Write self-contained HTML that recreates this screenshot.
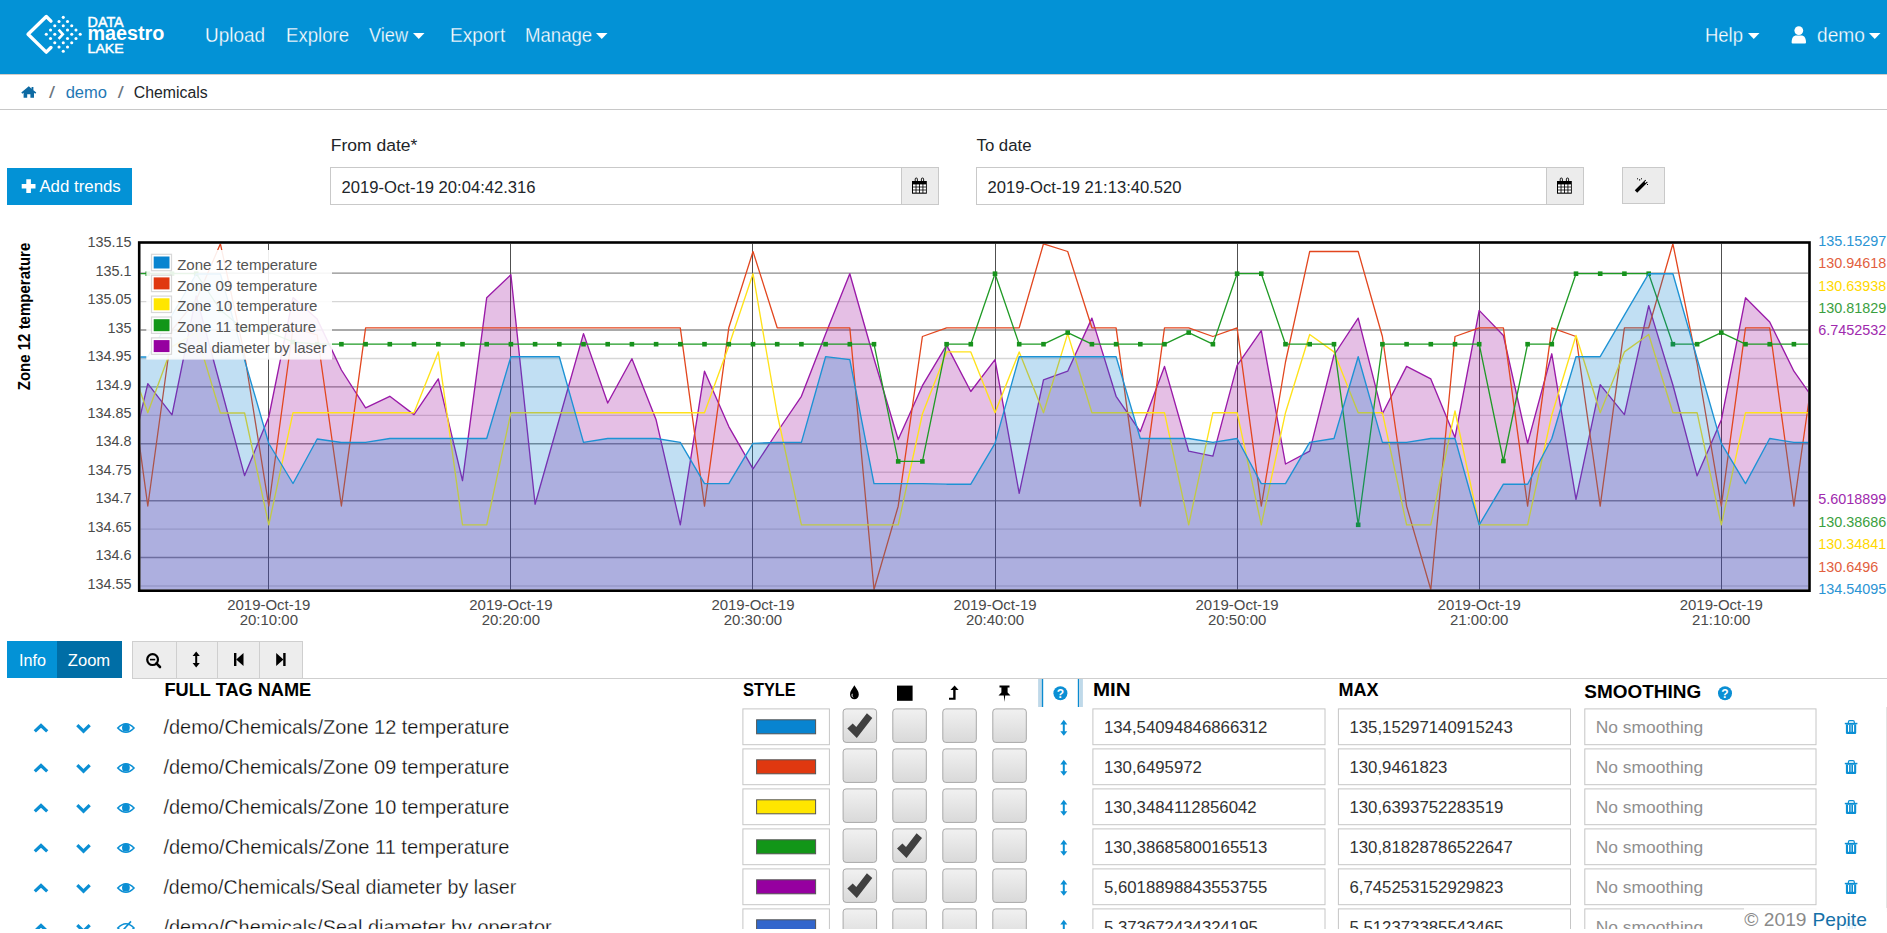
<!DOCTYPE html><html><head><meta charset="utf-8"><style>
html,body{margin:0;padding:0;background:#fff;width:1887px;height:933px;overflow:hidden;position:relative;font-family:"Liberation Sans",sans-serif}
.abs{position:absolute}
</style></head><body>
<div class="abs" style="left:0;top:0;width:1887px;height:74px;background:#0392d6"></div>
<div class="abs" style="left:0;top:74px;width:1887px;height:1px;background:#d2ccc8"></div>
<svg style="position:absolute;left:0;top:0" width="180" height="74">
<g fill="#fff"><circle cx="63.26" cy="17.33" r="1.55"/><circle cx="59.02" cy="21.57" r="1.55"/><circle cx="67.50" cy="21.57" r="1.55"/><circle cx="54.78" cy="25.81" r="1.55"/><circle cx="63.26" cy="25.81" r="1.55"/><circle cx="71.74" cy="25.81" r="1.55"/><circle cx="50.53" cy="30.05" r="1.55"/><circle cx="67.50" cy="30.05" r="1.55"/><circle cx="75.98" cy="30.05" r="1.55"/><circle cx="46.29" cy="34.29" r="1.55"/><circle cx="54.78" cy="34.29" r="1.55"/><circle cx="71.74" cy="34.29" r="1.55"/><circle cx="80.22" cy="34.29" r="1.55"/><circle cx="50.53" cy="38.53" r="1.55"/><circle cx="67.50" cy="38.53" r="1.55"/><circle cx="75.98" cy="38.53" r="1.55"/><circle cx="54.78" cy="42.78" r="1.55"/><circle cx="63.26" cy="42.78" r="1.55"/><circle cx="71.74" cy="42.78" r="1.55"/><circle cx="59.02" cy="47.02" r="1.55"/><circle cx="67.50" cy="47.02" r="1.55"/><circle cx="63.26" cy="51.26" r="1.55"/></g>
<polyline points="50.96,21.15 46.29,16.48 28.06,34.29 46.29,52.11 50.96,47.44" fill="none" stroke="#fff" stroke-width="3.4" stroke-linejoin="round" stroke-linecap="round"/>
<polyline points="58.59,29.63 62.83,34.29 58.59,38.96" fill="none" stroke="#fff" stroke-width="2.6"/>
<g font-family="Liberation Sans, sans-serif" fill="#fff" font-weight="bold">
<text x="87.6" y="26.7" font-size="13.8" font-weight="normal" stroke="#fff" stroke-width="0.5" textLength="36" lengthAdjust="spacingAndGlyphs">DATA</text>
<text x="87.4" y="39.6" font-size="19.5" textLength="77" lengthAdjust="spacingAndGlyphs">maestro</text>
<text x="87.6" y="52.5" font-size="13.5" font-weight="normal" stroke="#fff" stroke-width="0.5" textLength="36" lengthAdjust="spacingAndGlyphs">LAKE</text>
</g></svg>
<svg style="position:absolute;left:205px;top:10px;overflow:visible" width="60" height="40"><text x="0" y="32.2" font-family="Liberation Sans, sans-serif" font-size="20" fill="#fff" stroke="#0392d6" stroke-width="0.3" textLength="60" lengthAdjust="spacingAndGlyphs">Upload</text></svg>
<svg style="position:absolute;left:286px;top:10px;overflow:visible" width="63" height="40"><text x="0" y="32.2" font-family="Liberation Sans, sans-serif" font-size="20" fill="#fff" stroke="#0392d6" stroke-width="0.3" textLength="63" lengthAdjust="spacingAndGlyphs">Explore</text></svg>
<svg style="position:absolute;left:369.3px;top:10px;overflow:visible" width="39" height="40"><text x="0" y="32.2" font-family="Liberation Sans, sans-serif" font-size="20" fill="#fff" stroke="#0392d6" stroke-width="0.3" textLength="39" lengthAdjust="spacingAndGlyphs">View</text></svg>
<svg style="position:absolute;left:449.5px;top:10px;overflow:visible" width="55.2" height="40"><text x="0" y="32.2" font-family="Liberation Sans, sans-serif" font-size="20" fill="#fff" stroke="#0392d6" stroke-width="0.3" textLength="55.2" lengthAdjust="spacingAndGlyphs">Export</text></svg>
<svg style="position:absolute;left:524.6px;top:10px;overflow:visible" width="67.2" height="40"><text x="0" y="32.2" font-family="Liberation Sans, sans-serif" font-size="20" fill="#fff" stroke="#0392d6" stroke-width="0.3" textLength="67.2" lengthAdjust="spacingAndGlyphs">Manage</text></svg>
<svg style="position:absolute;left:1705px;top:10px;overflow:visible" width="38" height="40"><text x="0" y="32.2" font-family="Liberation Sans, sans-serif" font-size="20" fill="#fff" stroke="#0392d6" stroke-width="0.3" textLength="38" lengthAdjust="spacingAndGlyphs">Help</text></svg>
<svg style="position:absolute;left:1816.7px;top:10px;overflow:visible" width="47.9" height="40"><text x="0" y="32.2" font-family="Liberation Sans, sans-serif" font-size="20" fill="#fff" stroke="#0392d6" stroke-width="0.3" textLength="47.9" lengthAdjust="spacingAndGlyphs">demo</text></svg>
<svg style="position:absolute;left:412.7px;top:32.5px" width="12" height="7"><polygon points="0,0 11.5,0 5.75,6" fill="#fff"/></svg>
<svg style="position:absolute;left:596px;top:32.5px" width="12" height="7"><polygon points="0,0 11.5,0 5.75,6" fill="#fff"/></svg>
<svg style="position:absolute;left:1748.3px;top:32.5px" width="12" height="7"><polygon points="0,0 11.5,0 5.75,6" fill="#fff"/></svg>
<svg style="position:absolute;left:1869.2px;top:32.5px" width="12" height="7"><polygon points="0,0 11.5,0 5.75,6" fill="#fff"/></svg>
<svg class="abs" style="left:1791px;top:26px" width="16" height="18"><circle cx="7.8" cy="4.6" r="4.4" fill="#fff"/><path d="M0.6,16.5 C0.6,11.5 3,9.6 5,9.6 L10.6,9.6 C12.6,9.6 15,11.5 15,16.5 Q15,17.4 14,17.4 L1.6,17.4 Q0.6,17.4 0.6,16.5 Z" fill="#fff"/></svg>
<div class="abs" style="left:0;top:109px;width:1887px;height:1px;background:#c8c8c8"></div>
<svg class="abs" style="left:21px;top:86px" width="16" height="12"><path d="M7.8,0.3 L0.3,6.6 L1.4,7.8 L2.6,6.8 L2.6,11.8 L6.2,11.8 L6.2,8.2 L9.4,8.2 L9.4,11.8 L13,11.8 L13,6.8 L14.2,7.8 L15.3,6.6 L12.4,4.2 L12.4,1 L10.6,1 L10.6,2.7 Z" fill="#0d6aa3"/></svg>
<svg class="abs" style="left:0;top:75px" width="400" height="34"><g font-family="Liberation Sans, sans-serif"><text x="49" y="22.7" font-size="16" fill="#6c757d" font-weight="normal" text-anchor="start" textLength="6" lengthAdjust="spacingAndGlyphs" >/</text><text x="65.7" y="22.7" font-size="16" fill="#1f78b4" font-weight="normal" text-anchor="start" textLength="41.3" lengthAdjust="spacingAndGlyphs" >demo</text><text x="117.8" y="22.7" font-size="16" fill="#6c757d" font-weight="normal" text-anchor="start" textLength="6" lengthAdjust="spacingAndGlyphs" >/</text><text x="133.8" y="22.7" font-size="16" fill="#212529" font-weight="normal" text-anchor="start" textLength="73.8" lengthAdjust="spacingAndGlyphs" >Chemicals</text></g></svg>
<svg class="abs" style="left:0;top:120px" width="1887" height="100"><g font-family="Liberation Sans, sans-serif"><text x="330.8" y="30.7" font-size="16.3" fill="#212529" font-weight="normal" text-anchor="start" textLength="86.5" lengthAdjust="spacingAndGlyphs" >From date*</text><text x="976.5" y="30.7" font-size="16.3" fill="#212529" font-weight="normal" text-anchor="start" textLength="55" lengthAdjust="spacingAndGlyphs" >To date</text></g></svg>
<div class="abs" style="left:7px;top:168px;width:125px;height:37px;background:#0392d6"></div>
<svg class="abs" style="left:7px;top:168px" width="125" height="37"><path d="M17.9,11.3 h4.6 v4.6 h4.6 v4.6 h-4.6 v4.6 h-4.6 v-4.6 h-4.6 v-4.6 h4.6 z" fill="#fff" transform="translate(1.4,0)"/><g font-family="Liberation Sans, sans-serif"><text x="32.4" y="24" font-size="16.8" fill="#fff" font-weight="normal" text-anchor="start" textLength="81.4" lengthAdjust="spacingAndGlyphs" >Add trends</text></g></svg>
<div class="abs" style="left:330px;top:167px;width:570px;height:36px;border:1px solid #c9c9c9;background:#fff"></div>
<div class="abs" style="left:901px;top:167px;width:36px;height:36px;border:1px solid #c9c9c9;background:#ececec"></div>
<svg class="abs" style="left:330px;top:167px" width="300" height="38"><g font-family="Liberation Sans, sans-serif"><text x="11.6" y="26" font-size="16.5" fill="#212529" font-weight="normal" text-anchor="start" textLength="194" lengthAdjust="spacingAndGlyphs" >2019-Oct-19 20:04:42.316</text></g></svg>
<svg class="abs" style="left:912px;top:177px" width="17" height="18"><rect x="0" y="4" width="14.8" height="12.7" fill="#000"/><rect x="3.2" y="1" width="2.2" height="5" rx="1.1" fill="none" stroke="#000" stroke-width="0.9"/><rect x="9.4" y="1" width="2.2" height="5" rx="1.1" fill="none" stroke="#000" stroke-width="0.9"/><g fill="#fff"><rect x="1.00" y="7.40" width="2.6" height="2.2"/><rect x="4.45" y="7.40" width="2.6" height="2.2"/><rect x="7.90" y="7.40" width="2.6" height="2.2"/><rect x="11.35" y="7.40" width="2.6" height="2.2"/><rect x="1.00" y="10.40" width="2.6" height="2.2"/><rect x="4.45" y="10.40" width="2.6" height="2.2"/><rect x="7.90" y="10.40" width="2.6" height="2.2"/><rect x="11.35" y="10.40" width="2.6" height="2.2"/><rect x="1.00" y="13.40" width="2.6" height="2.2"/><rect x="4.45" y="13.40" width="2.6" height="2.2"/><rect x="7.90" y="13.40" width="2.6" height="2.2"/><rect x="11.35" y="13.40" width="2.6" height="2.2"/></g></svg>
<div class="abs" style="left:976px;top:167px;width:569px;height:36px;border:1px solid #c9c9c9;background:#fff"></div>
<div class="abs" style="left:1546px;top:167px;width:36px;height:36px;border:1px solid #c9c9c9;background:#ececec"></div>
<svg class="abs" style="left:976px;top:167px" width="300" height="38"><g font-family="Liberation Sans, sans-serif"><text x="11.6" y="26" font-size="16.5" fill="#212529" font-weight="normal" text-anchor="start" textLength="194" lengthAdjust="spacingAndGlyphs" >2019-Oct-19 21:13:40.520</text></g></svg>
<svg class="abs" style="left:1557px;top:177px" width="17" height="18"><rect x="0" y="4" width="14.8" height="12.7" fill="#000"/><rect x="3.2" y="1" width="2.2" height="5" rx="1.1" fill="none" stroke="#000" stroke-width="0.9"/><rect x="9.4" y="1" width="2.2" height="5" rx="1.1" fill="none" stroke="#000" stroke-width="0.9"/><g fill="#fff"><rect x="1.00" y="7.40" width="2.6" height="2.2"/><rect x="4.45" y="7.40" width="2.6" height="2.2"/><rect x="7.90" y="7.40" width="2.6" height="2.2"/><rect x="11.35" y="7.40" width="2.6" height="2.2"/><rect x="1.00" y="10.40" width="2.6" height="2.2"/><rect x="4.45" y="10.40" width="2.6" height="2.2"/><rect x="7.90" y="10.40" width="2.6" height="2.2"/><rect x="11.35" y="10.40" width="2.6" height="2.2"/><rect x="1.00" y="13.40" width="2.6" height="2.2"/><rect x="4.45" y="13.40" width="2.6" height="2.2"/><rect x="7.90" y="13.40" width="2.6" height="2.2"/><rect x="11.35" y="13.40" width="2.6" height="2.2"/></g></svg>
<div class="abs" style="left:1622px;top:167px;width:41px;height:35px;border:1px solid #c9c9c9;background:#ececec"></div>
<svg class="abs" style="left:1634px;top:177px" width="18" height="17"><line x1="2" y1="14.5" x2="12.5" y2="4" stroke="#000" stroke-width="3.4"/><line x1="11" y1="5.5" x2="13.5" y2="3" stroke="#fff" stroke-width="1.2"/><g fill="#000"><rect x="3" y="1.3" width="1" height="1"/><rect x="5" y="2.3" width="1.2" height="1.2"/><rect x="7" y="1.3" width="1" height="1"/><rect x="13" y="7" width="1" height="1"/></g></svg>
<svg id="chart" width="1887" height="420" viewBox="0 225 1887 420" style="position:absolute;left:0;top:225px">
<defs><clipPath id="pc"><rect x="140.5" y="243.8" width="1667.7" height="345.59999999999997"/></clipPath></defs>
<g><line x1="140.5" x2="1808.2" y1="586.00" y2="586.00" stroke="#d6d6d6" stroke-width="1.4"/><line x1="140.5" x2="1808.2" y1="557.56" y2="557.56" stroke="#8c8c8c" stroke-width="1.4"/><line x1="140.5" x2="1808.2" y1="529.12" y2="529.12" stroke="#d6d6d6" stroke-width="1.4"/><line x1="140.5" x2="1808.2" y1="500.68" y2="500.68" stroke="#8c8c8c" stroke-width="1.4"/><line x1="140.5" x2="1808.2" y1="472.24" y2="472.24" stroke="#d6d6d6" stroke-width="1.4"/><line x1="140.5" x2="1808.2" y1="443.80" y2="443.80" stroke="#8c8c8c" stroke-width="1.4"/><line x1="140.5" x2="1808.2" y1="415.36" y2="415.36" stroke="#d6d6d6" stroke-width="1.4"/><line x1="140.5" x2="1808.2" y1="386.92" y2="386.92" stroke="#8c8c8c" stroke-width="1.4"/><line x1="140.5" x2="1808.2" y1="358.48" y2="358.48" stroke="#d6d6d6" stroke-width="1.4"/><line x1="140.5" x2="1808.2" y1="330.04" y2="330.04" stroke="#8c8c8c" stroke-width="1.4"/><line x1="140.5" x2="1808.2" y1="301.60" y2="301.60" stroke="#d6d6d6" stroke-width="1.4"/><line x1="140.5" x2="1808.2" y1="273.16" y2="273.16" stroke="#8c8c8c" stroke-width="1.4"/><line x1="268.5" x2="268.5" y1="243.8" y2="589.4" stroke="#505050" stroke-width="1"/><line x1="510.5" x2="510.5" y1="243.8" y2="589.4" stroke="#505050" stroke-width="1"/><line x1="752.5" x2="752.5" y1="243.8" y2="589.4" stroke="#505050" stroke-width="1"/><line x1="995.5" x2="995.5" y1="243.8" y2="589.4" stroke="#505050" stroke-width="1"/><line x1="1237.5" x2="1237.5" y1="243.8" y2="589.4" stroke="#505050" stroke-width="1"/><line x1="1479.5" x2="1479.5" y1="243.8" y2="589.4" stroke="#505050" stroke-width="1"/><line x1="1721.5" x2="1721.5" y1="243.8" y2="589.4" stroke="#505050" stroke-width="1"/></g>
<g clip-path="url(#pc)">
<polygon points="123.6,594.4 123.6,487.0 147.8,383.7 172.0,414.8 196.2,296.0 220.4,385.7 244.6,475.6 268.8,417.0 293.0,297.6 317.2,319.1 341.4,370.0 365.6,407.9 389.8,396.3 414.0,414.6 438.3,378.9 462.5,480.7 486.7,297.8 510.9,274.7 535.1,504.2 559.3,419.0 583.5,333.6 607.7,403.0 631.9,358.7 656.1,419.8 680.3,524.8 704.5,371.2 728.8,426.6 753.0,468.9 777.2,432.0 801.4,396.3 825.6,334.0 849.8,273.7 874.0,358.8 898.2,439.5 922.4,385.7 946.6,345.1 970.8,391.5 995.0,359.6 1019.2,493.4 1043.5,379.9 1067.7,371.2 1091.9,318.1 1116.1,396.3 1140.3,431.6 1164.5,366.4 1188.7,451.2 1212.9,456.1 1237.1,365.4 1261.3,330.7 1285.5,464.0 1309.7,451.2 1334.0,355.0 1358.2,318.1 1382.4,413.7 1406.6,366.4 1430.8,378.9 1455.0,437.5 1479.2,310.4 1503.4,335.5 1527.6,443.4 1551.8,353.8 1576.0,499.3 1600.2,384.7 1624.4,414.6 1648.7,305.6 1672.9,385.0 1697.1,475.8 1721.3,420.0 1745.5,297.8 1769.7,322.0 1793.9,371.2 1818.1,405.6 1818.1,594.4" fill="#990099" fill-opacity="0.25"/>
<polyline points="123.6,487.0 147.8,383.7 172.0,414.8 196.2,296.0 220.4,385.7 244.6,475.6 268.8,417.0 293.0,297.6 317.2,319.1 341.4,370.0 365.6,407.9 389.8,396.3 414.0,414.6 438.3,378.9 462.5,480.7 486.7,297.8 510.9,274.7 535.1,504.2 559.3,419.0 583.5,333.6 607.7,403.0 631.9,358.7 656.1,419.8 680.3,524.8 704.5,371.2 728.8,426.6 753.0,468.9 777.2,432.0 801.4,396.3 825.6,334.0 849.8,273.7 874.0,358.8 898.2,439.5 922.4,385.7 946.6,345.1 970.8,391.5 995.0,359.6 1019.2,493.4 1043.5,379.9 1067.7,371.2 1091.9,318.1 1116.1,396.3 1140.3,431.6 1164.5,366.4 1188.7,451.2 1212.9,456.1 1237.1,365.4 1261.3,330.7 1285.5,464.0 1309.7,451.2 1334.0,355.0 1358.2,318.1 1382.4,413.7 1406.6,366.4 1430.8,378.9 1455.0,437.5 1479.2,310.4 1503.4,335.5 1527.6,443.4 1551.8,353.8 1576.0,499.3 1600.2,384.7 1624.4,414.6 1648.7,305.6 1672.9,385.0 1697.1,475.8 1721.3,420.0 1745.5,297.8 1769.7,322.0 1793.9,371.2 1818.1,405.6" fill="none" stroke="#9a1aa8" stroke-width="1.35" stroke-linejoin="round"/>
<polyline points="123.6,328.0 147.8,506.0 172.0,330.0 196.2,300.0 220.4,243.8 244.6,355.0 268.8,506.0 293.0,328.0 317.2,335.0 341.4,506.0 365.6,327.8 389.8,327.8 414.0,327.8 438.3,327.8 462.5,327.8 486.7,327.8 510.9,327.8 535.1,327.8 559.3,327.8 583.5,327.8 607.7,327.8 631.9,327.8 656.1,327.8 680.3,327.8 704.5,506.2 728.8,327.8 753.0,251.5 777.2,327.8 801.4,327.8 825.6,327.8 849.8,327.8 874.0,589.5 898.2,506.2 922.4,336.5 946.6,327.8 970.8,327.8 995.0,327.8 1019.2,327.8 1043.5,243.8 1067.7,251.5 1091.9,327.8 1116.1,327.8 1140.3,506.2 1164.5,327.8 1188.7,327.8 1212.9,336.5 1237.1,327.8 1261.3,506.2 1285.5,362.0 1309.7,251.5 1334.0,251.5 1358.2,251.5 1382.4,336.5 1406.6,506.2 1430.8,589.5 1455.0,336.5 1479.2,327.8 1503.4,327.8 1527.6,506.2 1551.8,327.8 1576.0,336.5 1600.2,506.2 1624.4,327.8 1648.7,327.8 1672.9,243.8 1697.1,363.5 1721.3,506.2 1745.5,327.8 1769.7,327.8 1793.9,506.2 1818.1,336.0" fill="none" stroke="#e2461e" stroke-width="1.3" stroke-linejoin="round"/>
<polyline points="123.6,345.0 147.8,412.7 172.0,346.7 196.2,332.6 220.4,413.0 244.6,413.0 268.8,524.8 293.0,412.7 317.2,412.7 341.4,412.7 365.6,412.7 389.8,412.7 414.0,412.7 438.3,351.9 462.5,524.8 486.7,524.8 510.9,412.7 535.1,412.7 559.3,412.7 583.5,412.7 607.7,412.7 631.9,412.7 656.1,412.7 680.3,412.7 704.5,412.7 728.8,346.0 753.0,273.7 777.2,414.0 801.4,524.8 825.6,524.8 849.8,524.8 874.0,524.8 898.2,524.8 922.4,414.0 946.6,351.9 970.8,351.9 995.0,412.7 1019.2,351.9 1043.5,412.7 1067.7,333.6 1091.9,412.7 1116.1,412.7 1140.3,412.7 1164.5,412.7 1188.7,524.8 1212.9,412.7 1237.1,412.7 1261.3,524.8 1285.5,412.7 1309.7,334.5 1334.0,351.9 1358.2,412.7 1382.4,412.7 1406.6,524.8 1430.8,524.8 1455.0,411.0 1479.2,524.8 1503.4,524.8 1527.6,524.8 1551.8,415.0 1576.0,335.5 1600.2,412.7 1624.4,351.9 1648.7,334.5 1672.9,412.7 1697.1,412.7 1721.3,524.8 1745.5,412.7 1769.7,412.7 1793.9,412.7 1818.1,412.7" fill="none" stroke="#ffe21a" stroke-width="1.35" stroke-linejoin="round"/>
<polyline points="123.6,273.7 147.8,273.7 172.0,273.7 196.2,273.7 220.4,310.0 244.6,330.0 268.8,332.0 293.0,342.0 317.2,344.2 341.4,344.2 365.6,344.2 389.8,344.2 414.0,344.2 438.3,344.2 462.5,344.2 486.7,344.2 510.9,344.2 535.1,344.2 559.3,344.2 583.5,344.2 607.7,344.2 631.9,344.2 656.1,344.2 680.3,344.2 704.5,344.2 728.8,344.2 753.0,344.2 777.2,344.2 801.4,344.2 825.6,344.2 849.8,344.2 874.0,344.2 898.2,461.4 922.4,461.4 946.6,344.2 970.8,344.2 995.0,273.7 1019.2,344.2 1043.5,344.2 1067.7,332.6 1091.9,344.2 1116.1,344.2 1140.3,344.2 1164.5,344.2 1188.7,332.6 1212.9,344.2 1237.1,273.7 1261.3,273.7 1285.5,344.2 1309.7,344.2 1334.0,344.2 1358.2,524.8 1382.4,344.2 1406.6,344.2 1430.8,344.2 1455.0,344.2 1479.2,344.2 1503.4,461.0 1527.6,344.2 1551.8,344.2 1576.0,273.7 1600.2,273.7 1624.4,273.7 1648.7,273.7 1672.9,344.2 1697.1,344.2 1721.3,332.6 1745.5,344.2 1769.7,344.2 1793.9,344.2 1818.1,344.2" fill="none" stroke="#1f9a25" stroke-width="1.3" stroke-linejoin="round"/>
<g fill="#17921c"><rect x="145.5" y="271.4" width="4.6" height="4.6"/><rect x="169.7" y="271.4" width="4.6" height="4.6"/><rect x="193.9" y="271.4" width="4.6" height="4.6"/><rect x="218.1" y="307.7" width="4.6" height="4.6"/><rect x="242.3" y="327.7" width="4.6" height="4.6"/><rect x="266.5" y="329.7" width="4.6" height="4.6"/><rect x="290.7" y="339.7" width="4.6" height="4.6"/><rect x="314.9" y="341.9" width="4.6" height="4.6"/><rect x="339.1" y="341.9" width="4.6" height="4.6"/><rect x="363.3" y="341.9" width="4.6" height="4.6"/><rect x="387.5" y="341.9" width="4.6" height="4.6"/><rect x="411.7" y="341.9" width="4.6" height="4.6"/><rect x="436.0" y="341.9" width="4.6" height="4.6"/><rect x="460.2" y="341.9" width="4.6" height="4.6"/><rect x="484.4" y="341.9" width="4.6" height="4.6"/><rect x="508.6" y="341.9" width="4.6" height="4.6"/><rect x="532.8" y="341.9" width="4.6" height="4.6"/><rect x="557.0" y="341.9" width="4.6" height="4.6"/><rect x="581.2" y="341.9" width="4.6" height="4.6"/><rect x="605.4" y="341.9" width="4.6" height="4.6"/><rect x="629.6" y="341.9" width="4.6" height="4.6"/><rect x="653.8" y="341.9" width="4.6" height="4.6"/><rect x="678.0" y="341.9" width="4.6" height="4.6"/><rect x="702.2" y="341.9" width="4.6" height="4.6"/><rect x="726.5" y="341.9" width="4.6" height="4.6"/><rect x="750.7" y="341.9" width="4.6" height="4.6"/><rect x="774.9" y="341.9" width="4.6" height="4.6"/><rect x="799.1" y="341.9" width="4.6" height="4.6"/><rect x="823.3" y="341.9" width="4.6" height="4.6"/><rect x="847.5" y="341.9" width="4.6" height="4.6"/><rect x="871.7" y="341.9" width="4.6" height="4.6"/><rect x="895.9" y="459.1" width="4.6" height="4.6"/><rect x="920.1" y="459.1" width="4.6" height="4.6"/><rect x="944.3" y="341.9" width="4.6" height="4.6"/><rect x="968.5" y="341.9" width="4.6" height="4.6"/><rect x="992.7" y="271.4" width="4.6" height="4.6"/><rect x="1016.9" y="341.9" width="4.6" height="4.6"/><rect x="1041.2" y="341.9" width="4.6" height="4.6"/><rect x="1065.4" y="330.3" width="4.6" height="4.6"/><rect x="1089.6" y="341.9" width="4.6" height="4.6"/><rect x="1113.8" y="341.9" width="4.6" height="4.6"/><rect x="1138.0" y="341.9" width="4.6" height="4.6"/><rect x="1162.2" y="341.9" width="4.6" height="4.6"/><rect x="1186.4" y="330.3" width="4.6" height="4.6"/><rect x="1210.6" y="341.9" width="4.6" height="4.6"/><rect x="1234.8" y="271.4" width="4.6" height="4.6"/><rect x="1259.0" y="271.4" width="4.6" height="4.6"/><rect x="1283.2" y="341.9" width="4.6" height="4.6"/><rect x="1307.4" y="341.9" width="4.6" height="4.6"/><rect x="1331.7" y="341.9" width="4.6" height="4.6"/><rect x="1355.9" y="522.5" width="4.6" height="4.6"/><rect x="1380.1" y="341.9" width="4.6" height="4.6"/><rect x="1404.3" y="341.9" width="4.6" height="4.6"/><rect x="1428.5" y="341.9" width="4.6" height="4.6"/><rect x="1452.7" y="341.9" width="4.6" height="4.6"/><rect x="1476.9" y="341.9" width="4.6" height="4.6"/><rect x="1501.1" y="458.7" width="4.6" height="4.6"/><rect x="1525.3" y="341.9" width="4.6" height="4.6"/><rect x="1549.5" y="341.9" width="4.6" height="4.6"/><rect x="1573.7" y="271.4" width="4.6" height="4.6"/><rect x="1597.9" y="271.4" width="4.6" height="4.6"/><rect x="1622.1" y="271.4" width="4.6" height="4.6"/><rect x="1646.4" y="271.4" width="4.6" height="4.6"/><rect x="1670.6" y="341.9" width="4.6" height="4.6"/><rect x="1694.8" y="341.9" width="4.6" height="4.6"/><rect x="1719.0" y="330.3" width="4.6" height="4.6"/><rect x="1743.2" y="341.9" width="4.6" height="4.6"/><rect x="1767.4" y="341.9" width="4.6" height="4.6"/><rect x="1791.6" y="341.9" width="4.6" height="4.6"/></g>
<polygon points="123.6,594.4 123.6,357.0 147.8,357.0 172.0,315.0 196.2,274.0 220.4,274.0 244.6,360.0 268.8,443.5 293.0,483.5 317.2,439.0 341.4,442.5 365.6,442.4 389.8,438.5 414.0,438.5 438.3,438.5 462.5,438.5 486.7,438.5 510.9,356.7 535.1,356.7 559.3,356.7 583.5,442.4 607.7,438.5 631.9,438.5 656.1,438.5 680.3,442.4 704.5,483.6 728.8,483.6 753.0,443.4 777.2,442.4 801.4,442.4 825.6,356.7 849.8,359.6 874.0,483.6 898.2,483.6 922.4,483.6 946.6,484.2 970.8,484.2 995.0,443.4 1019.2,356.7 1043.5,356.7 1067.7,356.7 1091.9,356.7 1116.1,356.7 1140.3,438.5 1164.5,438.5 1188.7,438.5 1212.9,442.4 1237.1,438.5 1261.3,483.6 1285.5,483.6 1309.7,442.4 1334.0,438.5 1358.2,356.7 1382.4,442.4 1406.6,442.4 1430.8,438.5 1455.0,438.5 1479.2,524.8 1503.4,484.2 1527.6,484.2 1551.8,438.5 1576.0,356.7 1600.2,356.7 1624.4,315.2 1648.7,273.7 1672.9,273.7 1697.1,358.5 1721.3,443.4 1745.5,483.6 1769.7,438.5 1793.9,442.4 1818.1,442.4 1818.1,594.4" fill="#0880d0" fill-opacity="0.25"/>
<polyline points="123.6,357.0 147.8,357.0 172.0,315.0 196.2,274.0 220.4,274.0 244.6,360.0 268.8,443.5 293.0,483.5 317.2,439.0 341.4,442.5 365.6,442.4 389.8,438.5 414.0,438.5 438.3,438.5 462.5,438.5 486.7,438.5 510.9,356.7 535.1,356.7 559.3,356.7 583.5,442.4 607.7,438.5 631.9,438.5 656.1,438.5 680.3,442.4 704.5,483.6 728.8,483.6 753.0,443.4 777.2,442.4 801.4,442.4 825.6,356.7 849.8,359.6 874.0,483.6 898.2,483.6 922.4,483.6 946.6,484.2 970.8,484.2 995.0,443.4 1019.2,356.7 1043.5,356.7 1067.7,356.7 1091.9,356.7 1116.1,356.7 1140.3,438.5 1164.5,438.5 1188.7,438.5 1212.9,442.4 1237.1,438.5 1261.3,483.6 1285.5,483.6 1309.7,442.4 1334.0,438.5 1358.2,356.7 1382.4,442.4 1406.6,442.4 1430.8,438.5 1455.0,438.5 1479.2,524.8 1503.4,484.2 1527.6,484.2 1551.8,438.5 1576.0,356.7 1600.2,356.7 1624.4,315.2 1648.7,273.7 1672.9,273.7 1697.1,358.5 1721.3,443.4 1745.5,483.6 1769.7,438.5 1793.9,442.4 1818.1,442.4" fill="none" stroke="#1d92d4" stroke-width="1.35" stroke-linejoin="round"/>
</g>
<rect x="139.2" y="242.5" width="1670.3" height="348.2" fill="none" stroke="#000" stroke-width="2.6"/>
<g font-family="Liberation Sans, sans-serif"><rect x="146.3" y="250" width="185.7" height="109.6" fill="#fff" fill-opacity="0.9"/><rect x="151.5" y="254.3" width="20" height="16.4" fill="#fff" stroke="#d8d8d8" stroke-width="1.2"/><rect x="153.7" y="256.5" width="15.8" height="12" fill="#0884d0"/><text x="177.2" y="269.7" font-size="15" fill="#545454">Zone 12 temperature</text><rect x="151.5" y="275.2" width="20" height="16.4" fill="#fff" stroke="#d8d8d8" stroke-width="1.2"/><rect x="153.7" y="277.4" width="15.8" height="12" fill="#e03810"/><text x="177.2" y="290.5" font-size="15" fill="#545454">Zone 09 temperature</text><rect x="151.5" y="296.1" width="20" height="16.4" fill="#fff" stroke="#d8d8d8" stroke-width="1.2"/><rect x="153.7" y="298.3" width="15.8" height="12" fill="#ffe600"/><text x="177.2" y="311.3" font-size="15" fill="#545454">Zone 10 temperature</text><rect x="151.5" y="317.0" width="20" height="16.4" fill="#fff" stroke="#d8d8d8" stroke-width="1.2"/><rect x="153.7" y="319.2" width="15.8" height="12" fill="#129618"/><text x="177.2" y="332.1" font-size="15" fill="#545454">Zone 11 temperature</text><rect x="151.5" y="337.9" width="20" height="16.4" fill="#fff" stroke="#d8d8d8" stroke-width="1.2"/><rect x="153.7" y="340.1" width="15.8" height="12" fill="#9600a0"/><text x="177.2" y="352.9" font-size="15" fill="#545454">Seal diameter by laser</text></g>
<g font-family="Liberation Sans, sans-serif" font-size="14.4" fill="#4a4a4a"><text x="131.5" y="588.6" text-anchor="end">134.55</text><text x="131.5" y="560.2" text-anchor="end">134.6</text><text x="131.5" y="531.7" text-anchor="end">134.65</text><text x="131.5" y="503.3" text-anchor="end">134.7</text><text x="131.5" y="474.8" text-anchor="end">134.75</text><text x="131.5" y="446.4" text-anchor="end">134.8</text><text x="131.5" y="418.0" text-anchor="end">134.85</text><text x="131.5" y="389.5" text-anchor="end">134.9</text><text x="131.5" y="361.1" text-anchor="end">134.95</text><text x="131.5" y="332.6" text-anchor="end">135</text><text x="131.5" y="304.2" text-anchor="end">135.05</text><text x="131.5" y="275.8" text-anchor="end">135.1</text><text x="131.5" y="247.3" text-anchor="end">135.15</text><text x="1818.3" y="245.9" fill="#2a94d4">135.15297</text><text x="1818.3" y="268.2" fill="#e2603e">130.94618</text><text x="1818.3" y="290.5" fill="#ffd800">130.63938</text><text x="1818.3" y="312.8" fill="#3aa03e">130.81829</text><text x="1818.3" y="335.1" fill="#a02aae">6.7452532</text><text x="1818.3" y="504.3" fill="#a02aae">5.6018899</text><text x="1818.3" y="526.8" fill="#3aa03e">130.38686</text><text x="1818.3" y="549.3" fill="#ffd800">130.34841</text><text x="1818.3" y="571.8" fill="#e2603e">130.6496</text><text x="1818.3" y="594.3" fill="#2a94d4">134.54095</text><text x="227.2" y="610.2" textLength="83.2" lengthAdjust="spacingAndGlyphs">2019-Oct-19</text><text x="239.7" y="624.8" textLength="58.3" lengthAdjust="spacingAndGlyphs">20:10:00</text><text x="469.3" y="610.2" textLength="83.2" lengthAdjust="spacingAndGlyphs">2019-Oct-19</text><text x="481.7" y="624.8" textLength="58.3" lengthAdjust="spacingAndGlyphs">20:20:00</text><text x="711.4" y="610.2" textLength="83.2" lengthAdjust="spacingAndGlyphs">2019-Oct-19</text><text x="723.8" y="624.8" textLength="58.3" lengthAdjust="spacingAndGlyphs">20:30:00</text><text x="953.4" y="610.2" textLength="83.2" lengthAdjust="spacingAndGlyphs">2019-Oct-19</text><text x="965.9" y="624.8" textLength="58.3" lengthAdjust="spacingAndGlyphs">20:40:00</text><text x="1195.5" y="610.2" textLength="83.2" lengthAdjust="spacingAndGlyphs">2019-Oct-19</text><text x="1208.0" y="624.8" textLength="58.3" lengthAdjust="spacingAndGlyphs">20:50:00</text><text x="1437.6" y="610.2" textLength="83.2" lengthAdjust="spacingAndGlyphs">2019-Oct-19</text><text x="1450.0" y="624.8" textLength="58.3" lengthAdjust="spacingAndGlyphs">21:00:00</text><text x="1679.7" y="610.2" textLength="83.2" lengthAdjust="spacingAndGlyphs">2019-Oct-19</text><text x="1692.1" y="624.8" textLength="58.3" lengthAdjust="spacingAndGlyphs">21:10:00</text></g>
<text transform="translate(30.2,390.2) rotate(-90)" x="0" y="0" textLength="147.5" lengthAdjust="spacingAndGlyphs" font-family="Liberation Sans, sans-serif" font-size="15.8" font-weight="bold" fill="#000">Zone 12 temperature</text>
</svg>
<div class="abs" style="left:7px;top:641px;width:50px;height:37px;background:#0392d6"></div>
<div class="abs" style="left:57px;top:641px;width:65px;height:37px;background:#006ea6"></div>
<svg class="abs" style="left:0;top:641px" width="130" height="37"><g font-family="Liberation Sans, sans-serif"><text x="19" y="25" font-size="17" fill="#fff" font-weight="normal" text-anchor="start" textLength="27" lengthAdjust="spacingAndGlyphs" >Info</text><text x="67.8" y="25" font-size="17" fill="#fff" font-weight="normal" text-anchor="start" textLength="42.4" lengthAdjust="spacingAndGlyphs" >Zoom</text></g></svg>
<div class="abs" style="left:132px;top:641px;width:169px;height:36px;border:1px solid #cfcfcf;background:#ededed"></div>
<div class="abs" style="left:175.5px;top:642px;width:1px;height:36px;background:#cfcfcf"></div>
<div class="abs" style="left:217.4px;top:642px;width:1px;height:36px;background:#cfcfcf"></div>
<div class="abs" style="left:259.1px;top:642px;width:1px;height:36px;background:#cfcfcf"></div>
<div class="abs" style="left:302px;top:678px;width:1585px;height:1px;background:#cfcfcf"></div>
<svg class="abs" style="left:132px;top:641px" width="170" height="37">
<circle cx="20.6" cy="18.6" r="5.4" fill="none" stroke="#000" stroke-width="2.2"/><line x1="24.4" y1="22.4" x2="28" y2="26" stroke="#000" stroke-width="2.6" stroke-linecap="round"/><line x1="18" y1="18.6" x2="23.2" y2="18.6" stroke="#000" stroke-width="1.6"/>
<polygon points="64.2,10.5 60.6,15 63.2,15 63.2,22 60.6,22 64.2,26.5 67.8,22 65.2,22 65.2,15 67.8,15" fill="#000"/>
<rect x="102" y="12" width="2.4" height="13" fill="#000"/><polygon points="104.2,18.5 111.5,12 111.5,25" fill="#000"/>
<rect x="151.2" y="12" width="2.4" height="13" fill="#000"/><polygon points="151.4,18.5 144.2,12 144.2,25" fill="#000"/>
</svg>
<svg class="abs" style="left:0;top:679px" width="1887" height="30"><g font-family="Liberation Sans, sans-serif"><text x="164.5" y="16.6" font-size="18" fill="#000" font-weight="bold" text-anchor="start" textLength="146.7" lengthAdjust="spacingAndGlyphs" >FULL TAG NAME</text><text x="743" y="16.6" font-size="18" fill="#000" font-weight="bold" text-anchor="start" textLength="52.8" lengthAdjust="spacingAndGlyphs" >STYLE</text><text x="1093" y="16.6" font-size="18" fill="#000" font-weight="bold" text-anchor="start" textLength="37.6" lengthAdjust="spacingAndGlyphs" >MIN</text><text x="1338.5" y="16.6" font-size="18" fill="#000" font-weight="bold" text-anchor="start" textLength="40" lengthAdjust="spacingAndGlyphs" >MAX</text><text x="1584.3" y="18.5" font-size="18" fill="#000" font-weight="bold" text-anchor="start" textLength="116.9" lengthAdjust="spacingAndGlyphs" >SMOOTHING</text></g><path d="M854.4,6.3 C856.5,9.8 858.8,12.2 858.8,15.5 C858.8,18.3 856.8,20.3 854.4,20.3 C852,20.3 850,18.3 850,15.5 C850,12.2 852.3,9.8 854.4,6.3 Z" fill="#000"/><path d="M852.3,14.8 C851.8,16.2 852,17.6 853,18.3" stroke="#fff" stroke-width="1" fill="none"/><rect x="897" y="6.6" width="15.6" height="15.2" fill="#000"/><path d="M954.6,6.5 L950.4,11 L953.2,11 L953.2,18.8 L949,18.8 L949,20.8 L955.6,20.8 L955.6,11 L958.6,11 Z" fill="#000"/><path d="M999.5,6.5 L1009.5,6.5 L1009.5,8.4 L1007.6,8.4 L1007.6,13.5 L1010.5,16.5 L1005.2,16.5 L1004.5,23 L1003.8,16.5 L998.5,16.5 L1001.4,13.5 L1001.4,8.4 L999.5,8.4 Z" fill="#000"/><rect x="1038.1" y="0" width="3.7" height="28" fill="#bfd9e9"/><rect x="1041.8" y="0" width="1.4" height="28" fill="#0a8ad0"/><rect x="1077.8" y="0" width="1.4" height="28" fill="#0a8ad0"/><rect x="1079.2" y="0" width="3.7" height="28" fill="#bfd9e9"/><circle cx="1060.4" cy="14.2" r="7" fill="#0b8fd4"/><text x="1060.4" y="18.6" font-family="Liberation Sans, sans-serif" font-size="12" font-weight="bold" fill="#fff" text-anchor="middle">?</text><circle cx="1725" cy="14.2" r="7" fill="#0b8fd4"/><text x="1725" y="18.6" font-family="Liberation Sans, sans-serif" font-size="12" font-weight="bold" fill="#fff" text-anchor="middle">?</text></svg>
<div class="abs" style="left:0;top:700px;width:1887px;height:229px;overflow:hidden"><svg width="1887" height="240" style="position:absolute;left:0;top:0"><defs><linearGradient id="cbg" x1="0" y1="0" x2="0" y2="1"><stop offset="0" stop-color="#f1f1f1"/><stop offset="1" stop-color="#d9d9d9"/></linearGradient></defs><polyline points="34.8,31.4 41,25.5 47.2,31.4" fill="none" stroke="#0b8fd4" stroke-width="3.2"/><polyline points="77.3,25.2 83.5,31.2 89.7,25.2" fill="none" stroke="#0b8fd4" stroke-width="3.2"/><path d="M117.8,28.0 Q125.9,19.4 134,28.0 Q125.9,36.599999999999994 117.8,28.0 Z" fill="none" stroke="#0b8fd4" stroke-width="1.6"/><circle cx="125.9" cy="27.7" r="3.9" fill="#0b8fd4"/><text x="163.4" y="34.2" font-family="Liberation Sans, sans-serif" font-size="20" fill="#0a0a0a" stroke="#fff" stroke-width="0.3" textLength="346" lengthAdjust="spacingAndGlyphs">/demo/Chemicals/Zone 12 temperature</text><rect x="742.9" y="8.9" width="86.5" height="35.8" fill="#fff" stroke="#c6c6c6" stroke-width="1"/><rect x="756.6" y="19.8" width="59" height="14" fill="#0884d0" stroke="#555" stroke-width="1"/><rect x="843.1" y="8.9" width="33.5" height="33.5" rx="3" fill="url(#cbg)" stroke="#a8a8a8" stroke-width="1"/><polygon points="847.3,28.6 852.7,23.4 856.3,27.0 866.9,13.3 872.3,18.0 856.8,38.1" fill="#404040"/><rect x="892.8" y="8.9" width="33.5" height="33.5" rx="3" fill="url(#cbg)" stroke="#a8a8a8" stroke-width="1"/><rect x="942.8" y="8.9" width="33.5" height="33.5" rx="3" fill="url(#cbg)" stroke="#a8a8a8" stroke-width="1"/><rect x="992.8" y="8.9" width="33.5" height="33.5" rx="3" fill="url(#cbg)" stroke="#a8a8a8" stroke-width="1"/><polygon points="1063.8,19.8 1060.3,24.4 1062.8,24.4 1062.8,31.200000000000003 1060.3,31.200000000000003 1063.8,35.8 1067.3,31.200000000000003 1064.8,31.200000000000003 1064.8,24.4 1067.3,24.4" fill="#0b8fd4"/><rect x="1092.9" y="8.9" width="232.0999999999999" height="35.8" fill="#fff" stroke="#c6c6c6" stroke-width="1"/><text x="1103.9" y="32.8" font-family="Liberation Sans, sans-serif" font-size="16.8" fill="#333">134,54094846866312</text><rect x="1338.4" y="8.9" width="232.0999999999999" height="35.8" fill="#fff" stroke="#c6c6c6" stroke-width="1"/><text x="1349.4" y="32.8" font-family="Liberation Sans, sans-serif" font-size="16.8" fill="#333">135,15297140915243</text><rect x="1584.8" y="8.9" width="231.20000000000005" height="35.8" fill="#fff" stroke="#c6c6c6" stroke-width="1"/><text x="1595.8" y="32.8" font-family="Liberation Sans, sans-serif" font-size="16.5" fill="#8f8f8f" textLength="107.3" lengthAdjust="spacingAndGlyphs">No smoothing</text><path d="M1848.4,23.0 v-1 q0,-1.3 1.3,-1.3 h3.3 q1.3,0 1.3,1.3 v1" fill="none" stroke="#0b8fd4" stroke-width="1.2"/><rect x="1844.8" y="22.799999999999997" width="12.6" height="1.5" fill="#0b8fd4"/><path d="M1845.9,24.2 h10.3 v8.6 q0,1.2 -1.2,1.2 h-7.9 q-1.2,0 -1.2,-1.2 z" fill="#0b8fd4"/><g fill="#fff"><rect x="1848" y="25.0" width="1.1" height="6.8"/><rect x="1850.5" y="25.0" width="1.1" height="6.8" fill-opacity="0.6"/><rect x="1853" y="25.0" width="1.1" height="6.8"/></g><polyline points="34.8,71.4 41,65.5 47.2,71.4" fill="none" stroke="#0b8fd4" stroke-width="3.2"/><polyline points="77.3,65.2 83.5,71.2 89.7,65.2" fill="none" stroke="#0b8fd4" stroke-width="3.2"/><path d="M117.8,68.0 Q125.9,59.400000000000006 134,68.0 Q125.9,76.60000000000001 117.8,68.0 Z" fill="none" stroke="#0b8fd4" stroke-width="1.6"/><circle cx="125.9" cy="67.7" r="3.9" fill="#0b8fd4"/><text x="163.4" y="74.2" font-family="Liberation Sans, sans-serif" font-size="20" fill="#0a0a0a" stroke="#fff" stroke-width="0.3" textLength="346" lengthAdjust="spacingAndGlyphs">/demo/Chemicals/Zone 09 temperature</text><rect x="742.9" y="48.9" width="86.5" height="35.8" fill="#fff" stroke="#c6c6c6" stroke-width="1"/><rect x="756.6" y="59.8" width="59" height="14" fill="#e03810" stroke="#555" stroke-width="1"/><rect x="843.1" y="48.9" width="33.5" height="33.5" rx="3" fill="url(#cbg)" stroke="#a8a8a8" stroke-width="1"/><rect x="892.8" y="48.9" width="33.5" height="33.5" rx="3" fill="url(#cbg)" stroke="#a8a8a8" stroke-width="1"/><rect x="942.8" y="48.9" width="33.5" height="33.5" rx="3" fill="url(#cbg)" stroke="#a8a8a8" stroke-width="1"/><rect x="992.8" y="48.9" width="33.5" height="33.5" rx="3" fill="url(#cbg)" stroke="#a8a8a8" stroke-width="1"/><polygon points="1063.8,59.8 1060.3,64.4 1062.8,64.4 1062.8,71.2 1060.3,71.2 1063.8,75.8 1067.3,71.2 1064.8,71.2 1064.8,64.4 1067.3,64.4" fill="#0b8fd4"/><rect x="1092.9" y="48.9" width="232.0999999999999" height="35.8" fill="#fff" stroke="#c6c6c6" stroke-width="1"/><text x="1103.9" y="72.8" font-family="Liberation Sans, sans-serif" font-size="16.8" fill="#333">130,6495972</text><rect x="1338.4" y="48.9" width="232.0999999999999" height="35.8" fill="#fff" stroke="#c6c6c6" stroke-width="1"/><text x="1349.4" y="72.8" font-family="Liberation Sans, sans-serif" font-size="16.8" fill="#333">130,9461823</text><rect x="1584.8" y="48.9" width="231.20000000000005" height="35.8" fill="#fff" stroke="#c6c6c6" stroke-width="1"/><text x="1595.8" y="72.8" font-family="Liberation Sans, sans-serif" font-size="16.5" fill="#8f8f8f" textLength="107.3" lengthAdjust="spacingAndGlyphs">No smoothing</text><path d="M1848.4,63.0 v-1 q0,-1.3 1.3,-1.3 h3.3 q1.3,0 1.3,1.3 v1" fill="none" stroke="#0b8fd4" stroke-width="1.2"/><rect x="1844.8" y="62.8" width="12.6" height="1.5" fill="#0b8fd4"/><path d="M1845.9,64.2 h10.3 v8.6 q0,1.2 -1.2,1.2 h-7.9 q-1.2,0 -1.2,-1.2 z" fill="#0b8fd4"/><g fill="#fff"><rect x="1848" y="65.0" width="1.1" height="6.8"/><rect x="1850.5" y="65.0" width="1.1" height="6.8" fill-opacity="0.6"/><rect x="1853" y="65.0" width="1.1" height="6.8"/></g><polyline points="34.8,111.4 41,105.5 47.2,111.4" fill="none" stroke="#0b8fd4" stroke-width="3.2"/><polyline points="77.3,105.2 83.5,111.2 89.7,105.2" fill="none" stroke="#0b8fd4" stroke-width="3.2"/><path d="M117.8,108.0 Q125.9,99.4 134,108.0 Q125.9,116.60000000000001 117.8,108.0 Z" fill="none" stroke="#0b8fd4" stroke-width="1.6"/><circle cx="125.9" cy="107.7" r="3.9" fill="#0b8fd4"/><text x="163.4" y="114.2" font-family="Liberation Sans, sans-serif" font-size="20" fill="#0a0a0a" stroke="#fff" stroke-width="0.3" textLength="346" lengthAdjust="spacingAndGlyphs">/demo/Chemicals/Zone 10 temperature</text><rect x="742.9" y="88.9" width="86.5" height="35.8" fill="#fff" stroke="#c6c6c6" stroke-width="1"/><rect x="756.6" y="99.80000000000001" width="59" height="14" fill="#ffe600" stroke="#555" stroke-width="1"/><rect x="843.1" y="88.9" width="33.5" height="33.5" rx="3" fill="url(#cbg)" stroke="#a8a8a8" stroke-width="1"/><rect x="892.8" y="88.9" width="33.5" height="33.5" rx="3" fill="url(#cbg)" stroke="#a8a8a8" stroke-width="1"/><rect x="942.8" y="88.9" width="33.5" height="33.5" rx="3" fill="url(#cbg)" stroke="#a8a8a8" stroke-width="1"/><rect x="992.8" y="88.9" width="33.5" height="33.5" rx="3" fill="url(#cbg)" stroke="#a8a8a8" stroke-width="1"/><polygon points="1063.8,99.80000000000001 1060.3,104.4 1062.8,104.4 1062.8,111.2 1060.3,111.2 1063.8,115.80000000000001 1067.3,111.2 1064.8,111.2 1064.8,104.4 1067.3,104.4" fill="#0b8fd4"/><rect x="1092.9" y="88.9" width="232.0999999999999" height="35.8" fill="#fff" stroke="#c6c6c6" stroke-width="1"/><text x="1103.9" y="112.80000000000001" font-family="Liberation Sans, sans-serif" font-size="16.8" fill="#333">130,3484112856042</text><rect x="1338.4" y="88.9" width="232.0999999999999" height="35.8" fill="#fff" stroke="#c6c6c6" stroke-width="1"/><text x="1349.4" y="112.80000000000001" font-family="Liberation Sans, sans-serif" font-size="16.8" fill="#333">130,6393752283519</text><rect x="1584.8" y="88.9" width="231.20000000000005" height="35.8" fill="#fff" stroke="#c6c6c6" stroke-width="1"/><text x="1595.8" y="112.80000000000001" font-family="Liberation Sans, sans-serif" font-size="16.5" fill="#8f8f8f" textLength="107.3" lengthAdjust="spacingAndGlyphs">No smoothing</text><path d="M1848.4,103.0 v-1 q0,-1.3 1.3,-1.3 h3.3 q1.3,0 1.3,1.3 v1" fill="none" stroke="#0b8fd4" stroke-width="1.2"/><rect x="1844.8" y="102.80000000000001" width="12.6" height="1.5" fill="#0b8fd4"/><path d="M1845.9,104.2 h10.3 v8.6 q0,1.2 -1.2,1.2 h-7.9 q-1.2,0 -1.2,-1.2 z" fill="#0b8fd4"/><g fill="#fff"><rect x="1848" y="105.0" width="1.1" height="6.8"/><rect x="1850.5" y="105.0" width="1.1" height="6.8" fill-opacity="0.6"/><rect x="1853" y="105.0" width="1.1" height="6.8"/></g><polyline points="34.8,151.4 41,145.5 47.2,151.4" fill="none" stroke="#0b8fd4" stroke-width="3.2"/><polyline points="77.3,145.20000000000002 83.5,151.20000000000002 89.7,145.20000000000002" fill="none" stroke="#0b8fd4" stroke-width="3.2"/><path d="M117.8,148.0 Q125.9,139.4 134,148.0 Q125.9,156.6 117.8,148.0 Z" fill="none" stroke="#0b8fd4" stroke-width="1.6"/><circle cx="125.9" cy="147.70000000000002" r="3.9" fill="#0b8fd4"/><text x="163.4" y="154.20000000000002" font-family="Liberation Sans, sans-serif" font-size="20" fill="#0a0a0a" stroke="#fff" stroke-width="0.3" textLength="346" lengthAdjust="spacingAndGlyphs">/demo/Chemicals/Zone 11 temperature</text><rect x="742.9" y="128.9" width="86.5" height="35.8" fill="#fff" stroke="#c6c6c6" stroke-width="1"/><rect x="756.6" y="139.8" width="59" height="14" fill="#129618" stroke="#555" stroke-width="1"/><rect x="843.1" y="128.9" width="33.5" height="33.5" rx="3" fill="url(#cbg)" stroke="#a8a8a8" stroke-width="1"/><rect x="892.8" y="128.9" width="33.5" height="33.5" rx="3" fill="url(#cbg)" stroke="#a8a8a8" stroke-width="1"/><polygon points="897.0,148.6 902.4,143.4 906.0,147.0 916.6,133.3 922.0,138.0 906.5,158.1" fill="#404040"/><rect x="942.8" y="128.9" width="33.5" height="33.5" rx="3" fill="url(#cbg)" stroke="#a8a8a8" stroke-width="1"/><rect x="992.8" y="128.9" width="33.5" height="33.5" rx="3" fill="url(#cbg)" stroke="#a8a8a8" stroke-width="1"/><polygon points="1063.8,139.8 1060.3,144.4 1062.8,144.4 1062.8,151.20000000000002 1060.3,151.20000000000002 1063.8,155.8 1067.3,151.20000000000002 1064.8,151.20000000000002 1064.8,144.4 1067.3,144.4" fill="#0b8fd4"/><rect x="1092.9" y="128.9" width="232.0999999999999" height="35.8" fill="#fff" stroke="#c6c6c6" stroke-width="1"/><text x="1103.9" y="152.8" font-family="Liberation Sans, sans-serif" font-size="16.8" fill="#333">130,38685800165513</text><rect x="1338.4" y="128.9" width="232.0999999999999" height="35.8" fill="#fff" stroke="#c6c6c6" stroke-width="1"/><text x="1349.4" y="152.8" font-family="Liberation Sans, sans-serif" font-size="16.8" fill="#333">130,81828786522647</text><rect x="1584.8" y="128.9" width="231.20000000000005" height="35.8" fill="#fff" stroke="#c6c6c6" stroke-width="1"/><text x="1595.8" y="152.8" font-family="Liberation Sans, sans-serif" font-size="16.5" fill="#8f8f8f" textLength="107.3" lengthAdjust="spacingAndGlyphs">No smoothing</text><path d="M1848.4,143.0 v-1 q0,-1.3 1.3,-1.3 h3.3 q1.3,0 1.3,1.3 v1" fill="none" stroke="#0b8fd4" stroke-width="1.2"/><rect x="1844.8" y="142.8" width="12.6" height="1.5" fill="#0b8fd4"/><path d="M1845.9,144.20000000000002 h10.3 v8.6 q0,1.2 -1.2,1.2 h-7.9 q-1.2,0 -1.2,-1.2 z" fill="#0b8fd4"/><g fill="#fff"><rect x="1848" y="145.0" width="1.1" height="6.8"/><rect x="1850.5" y="145.0" width="1.1" height="6.8" fill-opacity="0.6"/><rect x="1853" y="145.0" width="1.1" height="6.8"/></g><polyline points="34.8,191.4 41,185.5 47.2,191.4" fill="none" stroke="#0b8fd4" stroke-width="3.2"/><polyline points="77.3,185.20000000000002 83.5,191.20000000000002 89.7,185.20000000000002" fill="none" stroke="#0b8fd4" stroke-width="3.2"/><path d="M117.8,188.0 Q125.9,179.4 134,188.0 Q125.9,196.6 117.8,188.0 Z" fill="none" stroke="#0b8fd4" stroke-width="1.6"/><circle cx="125.9" cy="187.70000000000002" r="3.9" fill="#0b8fd4"/><text x="163.4" y="194.20000000000002" font-family="Liberation Sans, sans-serif" font-size="20" fill="#0a0a0a" stroke="#fff" stroke-width="0.3" textLength="352.9" lengthAdjust="spacingAndGlyphs">/demo/Chemicals/Seal diameter by laser</text><rect x="742.9" y="168.9" width="86.5" height="35.8" fill="#fff" stroke="#c6c6c6" stroke-width="1"/><rect x="756.6" y="179.8" width="59" height="14" fill="#9600a0" stroke="#555" stroke-width="1"/><rect x="843.1" y="168.9" width="33.5" height="33.5" rx="3" fill="url(#cbg)" stroke="#a8a8a8" stroke-width="1"/><polygon points="847.3,188.6 852.7,183.4 856.3,187.0 866.9,173.3 872.3,178.0 856.8,198.1" fill="#404040"/><rect x="892.8" y="168.9" width="33.5" height="33.5" rx="3" fill="url(#cbg)" stroke="#a8a8a8" stroke-width="1"/><rect x="942.8" y="168.9" width="33.5" height="33.5" rx="3" fill="url(#cbg)" stroke="#a8a8a8" stroke-width="1"/><rect x="992.8" y="168.9" width="33.5" height="33.5" rx="3" fill="url(#cbg)" stroke="#a8a8a8" stroke-width="1"/><polygon points="1063.8,179.8 1060.3,184.4 1062.8,184.4 1062.8,191.20000000000002 1060.3,191.20000000000002 1063.8,195.8 1067.3,191.20000000000002 1064.8,191.20000000000002 1064.8,184.4 1067.3,184.4" fill="#0b8fd4"/><rect x="1092.9" y="168.9" width="232.0999999999999" height="35.8" fill="#fff" stroke="#c6c6c6" stroke-width="1"/><text x="1103.9" y="192.8" font-family="Liberation Sans, sans-serif" font-size="16.8" fill="#333">5,6018898843553755</text><rect x="1338.4" y="168.9" width="232.0999999999999" height="35.8" fill="#fff" stroke="#c6c6c6" stroke-width="1"/><text x="1349.4" y="192.8" font-family="Liberation Sans, sans-serif" font-size="16.8" fill="#333">6,745253152929823</text><rect x="1584.8" y="168.9" width="231.20000000000005" height="35.8" fill="#fff" stroke="#c6c6c6" stroke-width="1"/><text x="1595.8" y="192.8" font-family="Liberation Sans, sans-serif" font-size="16.5" fill="#8f8f8f" textLength="107.3" lengthAdjust="spacingAndGlyphs">No smoothing</text><path d="M1848.4,183.0 v-1 q0,-1.3 1.3,-1.3 h3.3 q1.3,0 1.3,1.3 v1" fill="none" stroke="#0b8fd4" stroke-width="1.2"/><rect x="1844.8" y="182.8" width="12.6" height="1.5" fill="#0b8fd4"/><path d="M1845.9,184.20000000000002 h10.3 v8.6 q0,1.2 -1.2,1.2 h-7.9 q-1.2,0 -1.2,-1.2 z" fill="#0b8fd4"/><g fill="#fff"><rect x="1848" y="185.0" width="1.1" height="6.8"/><rect x="1850.5" y="185.0" width="1.1" height="6.8" fill-opacity="0.6"/><rect x="1853" y="185.0" width="1.1" height="6.8"/></g><polyline points="34.8,231.4 41,225.5 47.2,231.4" fill="none" stroke="#0b8fd4" stroke-width="3.2"/><polyline points="77.3,225.20000000000002 83.5,231.20000000000002 89.7,225.20000000000002" fill="none" stroke="#0b8fd4" stroke-width="3.2"/><path d="M117.8,228.0 Q125.9,219.4 134,228.0 Q125.9,236.6 117.8,228.0 Z" fill="none" stroke="#0b8fd4" stroke-width="1.6"/><line x1="120" y1="233.4" x2="131" y2="221.4" stroke="#0b8fd4" stroke-width="1.6"/><text x="163.4" y="234.20000000000002" font-family="Liberation Sans, sans-serif" font-size="20" fill="#0a0a0a" stroke="#fff" stroke-width="0.3" textLength="388.2" lengthAdjust="spacingAndGlyphs">/demo/Chemicals/Seal diameter by operator</text><rect x="742.9" y="208.9" width="86.5" height="35.8" fill="#fff" stroke="#c6c6c6" stroke-width="1"/><rect x="756.6" y="219.8" width="59" height="14" fill="#3366cc" stroke="#555" stroke-width="1"/><rect x="843.1" y="208.9" width="33.5" height="33.5" rx="3" fill="url(#cbg)" stroke="#a8a8a8" stroke-width="1"/><rect x="892.8" y="208.9" width="33.5" height="33.5" rx="3" fill="url(#cbg)" stroke="#a8a8a8" stroke-width="1"/><rect x="942.8" y="208.9" width="33.5" height="33.5" rx="3" fill="url(#cbg)" stroke="#a8a8a8" stroke-width="1"/><rect x="992.8" y="208.9" width="33.5" height="33.5" rx="3" fill="url(#cbg)" stroke="#a8a8a8" stroke-width="1"/><polygon points="1063.8,219.8 1060.3,224.4 1062.8,224.4 1062.8,231.20000000000002 1060.3,231.20000000000002 1063.8,235.8 1067.3,231.20000000000002 1064.8,231.20000000000002 1064.8,224.4 1067.3,224.4" fill="#0b8fd4"/><rect x="1092.9" y="208.9" width="232.0999999999999" height="35.8" fill="#fff" stroke="#c6c6c6" stroke-width="1"/><text x="1103.9" y="232.8" font-family="Liberation Sans, sans-serif" font-size="16.8" fill="#333">5,373672434324195</text><rect x="1338.4" y="208.9" width="232.0999999999999" height="35.8" fill="#fff" stroke="#c6c6c6" stroke-width="1"/><text x="1349.4" y="232.8" font-family="Liberation Sans, sans-serif" font-size="16.8" fill="#333">5,512373385543465</text><rect x="1584.8" y="208.9" width="231.20000000000005" height="35.8" fill="#fff" stroke="#c6c6c6" stroke-width="1"/><text x="1595.8" y="232.8" font-family="Liberation Sans, sans-serif" font-size="16.5" fill="#8f8f8f" textLength="107.3" lengthAdjust="spacingAndGlyphs">No smoothing</text><path d="M1848.4,223.0 v-1 q0,-1.3 1.3,-1.3 h3.3 q1.3,0 1.3,1.3 v1" fill="none" stroke="#0b8fd4" stroke-width="1.2"/><rect x="1844.8" y="222.8" width="12.6" height="1.5" fill="#0b8fd4"/><path d="M1845.9,224.20000000000002 h10.3 v8.6 q0,1.2 -1.2,1.2 h-7.9 q-1.2,0 -1.2,-1.2 z" fill="#0b8fd4"/><g fill="#fff"><rect x="1848" y="225.0" width="1.1" height="6.8"/><rect x="1850.5" y="225.0" width="1.1" height="6.8" fill-opacity="0.6"/><rect x="1853" y="225.0" width="1.1" height="6.8"/></g><rect x="1886" y="7" width="1" height="205" fill="#e4e4e4"/></svg></div>
<div class="abs" style="left:1744px;top:908px;width:143px;height:21px;background:rgba(255,255,255,0.88)"></div>
<svg class="abs" style="left:1740px;top:905px" width="147" height="28"><g font-family="Liberation Sans, sans-serif"><text x="4.3" y="21" font-size="19" fill="#8a8a8a" font-weight="normal" text-anchor="start" textLength="62.2" lengthAdjust="spacingAndGlyphs" >© 2019</text><text x="72.5" y="21" font-size="19" fill="#1470a8" font-weight="normal" text-anchor="start" textLength="54.3" lengthAdjust="spacingAndGlyphs" >Pepite</text></g></svg>
</body></html>
